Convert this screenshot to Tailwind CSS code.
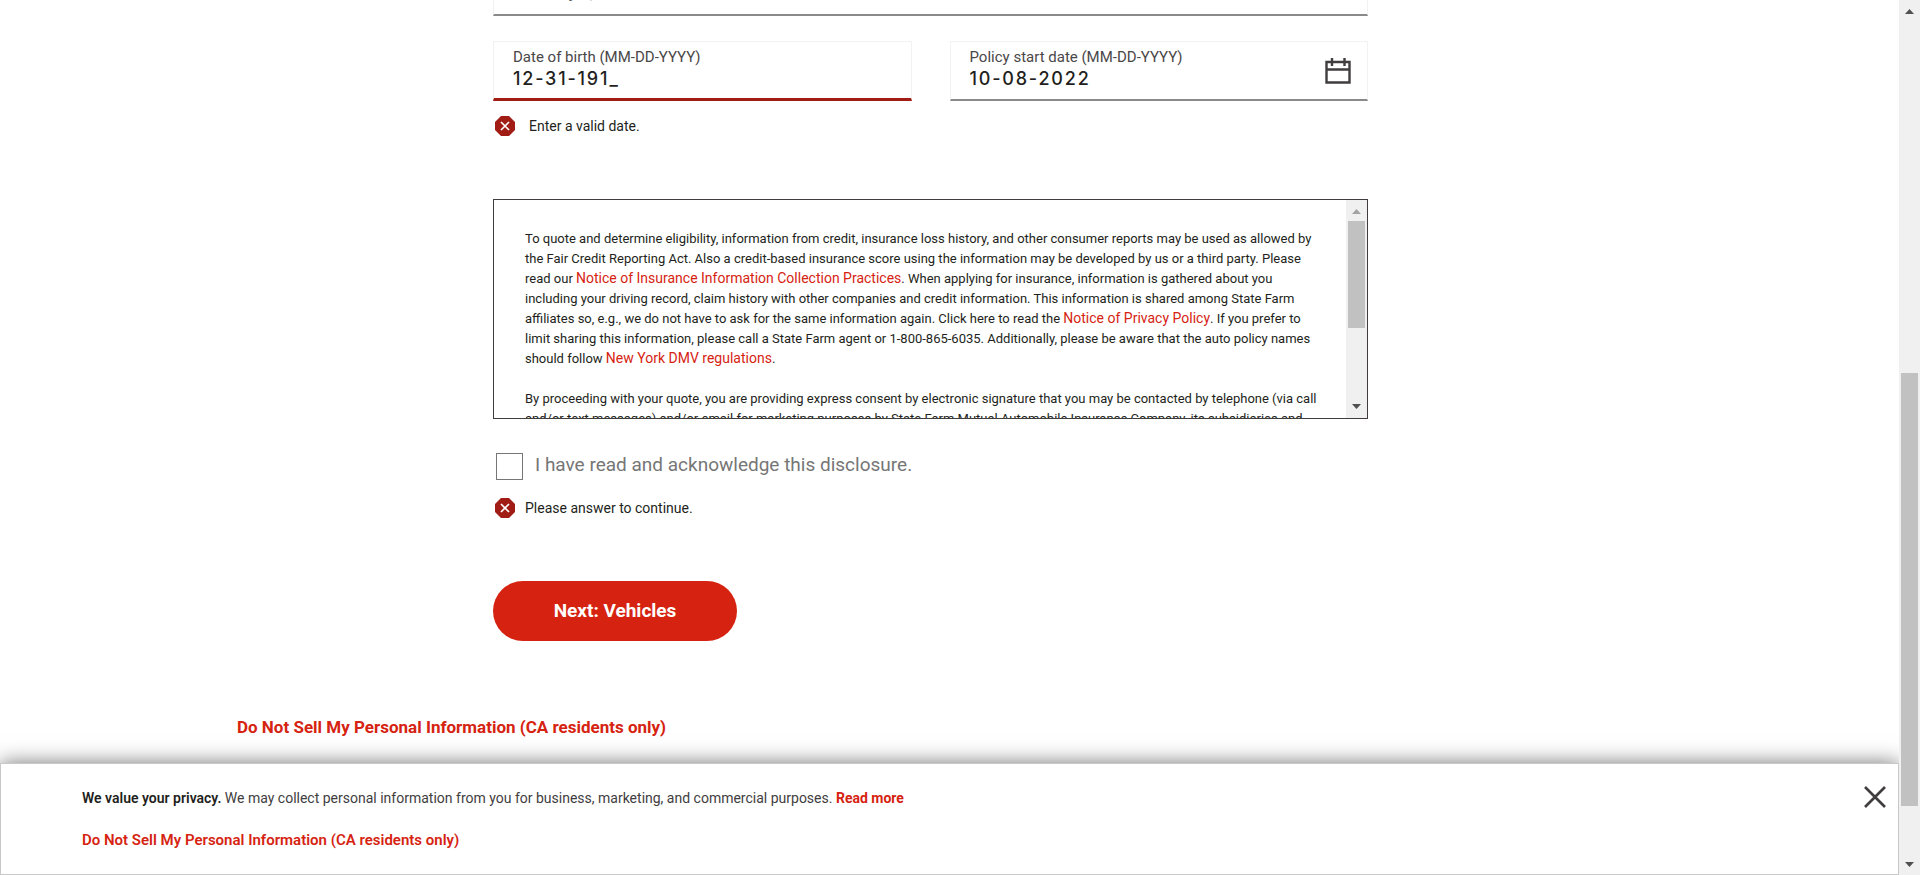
<!DOCTYPE html>
<html lang="en">
<head>
<meta charset="utf-8">
<title>Auto quote</title>
<script src="https://cdn.jsdelivr.net/npm/@tailwindcss/browser@4"></script>
</head>
<body class="flex h-screen overflow-hidden bg-white font-[Roboto,sans-serif] text-[#231f20]">
<div class="flex min-w-0 flex-1 flex-col">
  <main class="min-h-0 flex-1 overflow-hidden">
    <div class="mx-auto max-w-[1425px]">
      <form class="ml-64 max-w-[875px]">
        <div class="-mt-11 flex h-15 flex-col border border-b-2 border-[#f2f2f2] border-b-[#8a8a8a] px-[19px] pt-[7px]">
          <label for="city" class="text-[15px] leading-4 text-[#4a4748]">City, State</label>
          <input id="city" value="Brooklyn, NY" class="h-[22px] w-full font-[Inter,sans-serif] text-lg leading-[22px] font-medium outline-none">
        </div>
        <div class="mt-[25px] grid grid-cols-2 gap-[38px]">
          <div>
            <div class="flex h-15 flex-col border border-b-3 border-[#f2f2f2] border-b-[#a01c14] px-[19px] pt-[7px]">
              <label for="dob" class="text-[15px] leading-4 text-[#4a4748]">Date of birth (MM-DD-YYYY)</label>
              <input id="dob" value="12-31-191_" class="h-7 w-full font-[Inter,sans-serif] text-lg font-medium tracking-widest outline-none">
            </div>
            <p class="mt-[15px] flex items-center gap-3.5 pl-0.5 text-sm leading-5">
              <svg class="size-5" viewBox="0 0 20 20" aria-hidden="true"><path d="M6 0h8l6 6v8l-6 6H6l-6-6V6z" fill="#a01c14"/><path d="M6 6l8 8M14 6l-8 8" stroke="#fff" stroke-width="1.7"/></svg>
              Enter a valid date.
            </p>
          </div>
          <div class="flex h-15 items-center border border-b-2 border-[#f2f2f2] border-b-[#8a8a8a] pr-4 pl-[19px]">
            <div class="flex h-full min-w-0 flex-1 flex-col pt-[7px]">
              <label for="start" class="text-[15px] leading-4 text-[#4a4748]">Policy start date (MM-DD-YYYY)</label>
              <input id="start" value="10-08-2022" class="h-7 w-full font-[Inter,sans-serif] text-lg font-medium tracking-widest outline-none">
            </div>
            <button type="button" aria-label="Open calendar">
              <svg class="block size-[26px]" viewBox="0 0 26 26" fill="none" stroke="#413d3e" stroke-width="2.400"><path d="M1.500 4h23v20.500h-23zM1.500 11.500h23"/><path d="M7 0v8M19.500 0v8"/></svg>
            </button>
          </div>
        </div>

        <section class="mt-[63px] flex h-55 border border-[#413d3e]" aria-label="Disclosure">
          <div class="min-w-0 flex-1 overflow-hidden pt-[29px] pr-6 pl-[31px] text-[13px] leading-5">
            <p>To quote and determine eligibility, information from credit, insurance loss history, and other consumer reports may be used as allowed by<br>
            the Fair Credit Reporting Act. Also a credit-based insurance score using the information may be developed by us or a third party. Please<br>
            read our <a href="#" class="text-sm leading-4 text-[#d62311]">Notice of Insurance Information Collection Practices</a>. When applying for insurance, information is gathered about you<br>
            including your driving record, claim history with other companies and credit information. This information is shared among State Farm<br>
            affiliates so, e.g., we do not have to ask for the same information again. Click here to read the <a href="#" class="text-sm leading-4 text-[#d62311]">Notice of Privacy Policy</a>. If you prefer to<br>
            limit sharing this information, please call a State Farm agent or 1-800-865-6035. Additionally, please be aware that the auto policy names<br>
            should follow <a href="#" class="text-sm leading-4 text-[#d62311]">New York DMV regulations</a>.</p>
            <p class="mt-5">By proceeding with your quote, you are providing express consent by electronic signature that you may be contacted by telephone (via call<br>
            and/or text messages) and/or email for marketing purposes by State Farm Mutual Automobile Insurance Company, its subsidiaries and</p>
          </div>
          <div class="flex w-[21px] shrink-0 flex-col items-center bg-[#f0f0f0]" aria-hidden="true">
            <svg class="h-[21px] w-[21px] shrink-0" viewBox="0 0 21 21"><path d="M6 14l4.500-5 4.500 5z" fill="#a3a3a3"/></svg>
            <div class="h-[107px] w-[17px] bg-[#c1c1c1]"></div>
            <svg class="mt-auto h-[21px] w-[21px] shrink-0" viewBox="0 0 21 21"><path d="M6 7h9l-4.500 5z" fill="#505050"/></svg>
          </div>
        </section>

        <div class="mt-[34px] flex pl-[3px]">
          <input id="ack" type="checkbox" class="size-[27px] appearance-none border border-[#767676]">
          <label for="ack" class="pl-3 text-[19px] leading-6 text-[#767676]">I have read and acknowledge this disclosure.</label>
        </div>
        <p class="mt-[18px] flex items-center gap-2.5 pl-0.5 text-sm leading-5">
          <svg class="size-5" viewBox="0 0 20 20" aria-hidden="true"><path d="M6 0h8l6 6v8l-6 6H6l-6-6V6z" fill="#a01c14"/><path d="M6 6l8 8M14 6l-8 8" stroke="#fff" stroke-width="1.7"/></svg>
          Please answer to continue.
        </p>
        <button type="button" class="mt-[63px] block h-15 w-61 rounded-full bg-[#d62311] text-[19px] leading-6 font-bold text-white">Next: Vehicles</button>
      </form>
      <a href="#" class="mt-[74px] inline-block text-[17px] leading-6 font-bold text-[#d62311]">Do Not Sell My Personal Information (CA residents only)</a>
    </div>
  </main>

  <aside class="relative flex h-28 shrink-0 items-start justify-between border border-[#c8c8c8] bg-white pr-3 pl-[81px] shadow-[0_0_20px_rgba(0,0,0,0.55)]">
    <div class="pt-6 text-sm leading-5 text-[#413d3e]">
      <p><strong class="font-semibold text-[#231f20]">We value your privacy.</strong> We may collect personal information from you for business, marketing, and commercial purposes. <a href="#" class="font-bold text-[#d62311]">Read more</a></p>
      <a href="#" class="mt-[22px] inline-block text-[15px] leading-5 font-semibold text-[#d62311]">Do Not Sell My Personal Information (CA residents only)</a>
    </div>
    <button type="button" aria-label="Close" class="mt-[22px]">
      <svg class="block size-[22px]" viewBox="0 0 22 22" fill="none" stroke="#413d3e" stroke-width="2.600"><path d="M1 1l20 20M21 1L1 21"/></svg>
    </button>
  </aside>
</div>
<div class="relative z-10 flex w-[21px] shrink-0 flex-col items-center bg-[#f0f0f0]" aria-hidden="true">
  <svg class="h-[21px] w-[21px] shrink-0" viewBox="0 0 21 21"><path d="M6 14l4.500-5 4.500 5z" fill="#505050"/></svg>
  <div class="grow-352"></div>
  <div class="w-[17px] grow-433 bg-[#c1c1c1]"></div>
  <div class="grow-48"></div>
  <svg class="h-[21px] w-[21px] shrink-0" viewBox="0 0 21 21"><path d="M6 8h9l-4.500 5z" fill="#505050"/></svg>
</div>
</body>
</html>
